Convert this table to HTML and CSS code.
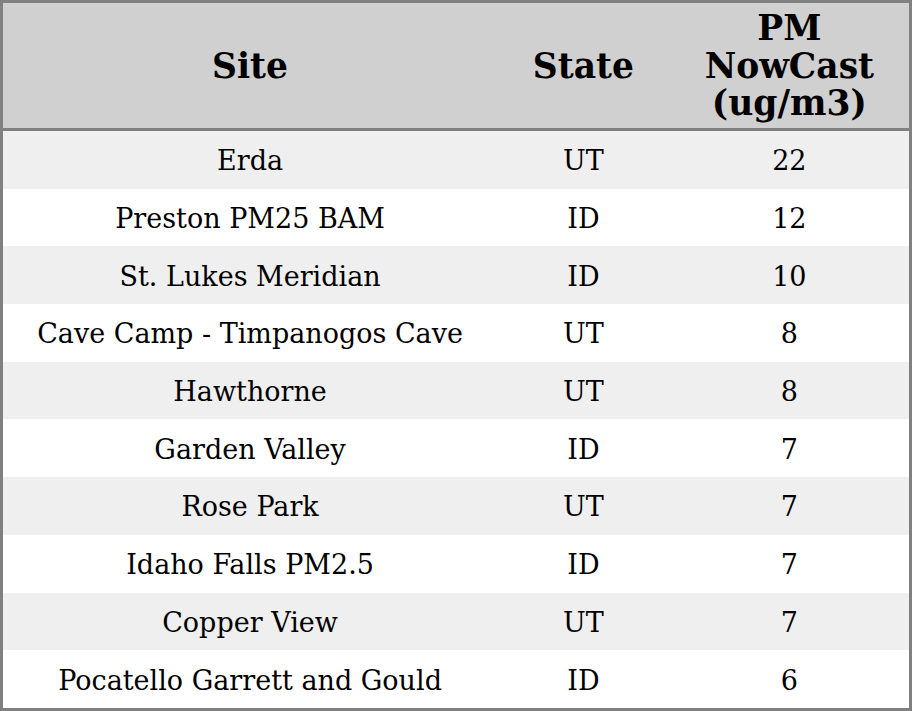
FILE: index.html
```html
<!DOCTYPE html>
<html>
<head>
<meta charset="utf-8">
<link rel="stylesheet" href="styles.css">
</head>
<body>
<table class="aq-table">
  <colgroup>
    <col class="col-site">
    <col class="col-state">
    <col class="col-pm">
  </colgroup>
  <thead>
    <tr>
      <th>Site</th>
      <th>State</th>
      <th>PM NowCast (ug/m3)</th>
    </tr>
  </thead>
  <tbody>
    <tr><td>Erda</td><td>UT</td><td>22</td></tr>
    <tr><td>Preston PM25 BAM</td><td>ID</td><td>12</td></tr>
    <tr><td>St. Lukes Meridian</td><td>ID</td><td>10</td></tr>
    <tr><td>Cave Camp - Timpanogos Cave</td><td>UT</td><td>8</td></tr>
    <tr><td>Hawthorne</td><td>UT</td><td>8</td></tr>
    <tr><td>Garden Valley</td><td>ID</td><td>7</td></tr>
    <tr><td>Rose Park</td><td>UT</td><td>7</td></tr>
    <tr><td>Idaho Falls PM2.5</td><td>ID</td><td>7</td></tr>
    <tr><td>Copper View</td><td>UT</td><td>7</td></tr>
    <tr><td>Pocatello Garrett and Gould</td><td>ID</td><td>6</td></tr>
  </tbody>
</table>
</body>
</html>
```
FILE: styles.css
```css
html, body {
  margin: 0;
  padding: 0;
  background: #ffffff;
}
.aq-table {
  width: 912px;
  height: 711px;
  table-layout: fixed;
  border-collapse: collapse;
  border: 3px solid #808080;
  font-family: "DejaVu Serif", serif;
  color: #000;
}
.col-site { width: 494px; }
.col-state { width: 172px; }
.col-pm { width: 240px; }
.aq-table th {
  background: #d0d0d0;
  font-size: 34.5px;
  font-weight: bold;
  line-height: 37.5px;
  height: 123px;
  padding: 2px 4px 0;
  text-align: center;
  vertical-align: middle;
  border-bottom: 3px solid #808080;
}
.aq-table td {
  font-size: 27px;
  text-align: center;
  vertical-align: middle;
  padding: 2px 4px 0;
  height: 55.7px;
}
.aq-table tbody tr:nth-child(odd) td {
  background: #efefef;
}
```
